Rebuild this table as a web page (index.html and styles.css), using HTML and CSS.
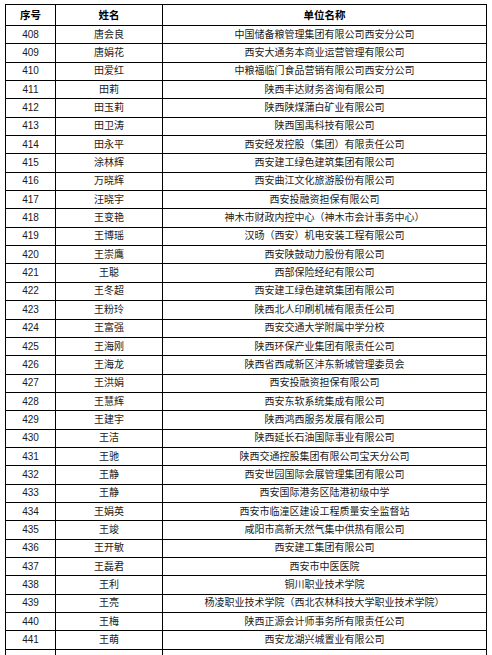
FILE: index.html
```html
<!DOCTYPE html>
<html lang="zh-CN">
<head>
<meta charset="utf-8">
<title>名单</title>
<link rel="stylesheet" href="styles.css">
</head>
<body>
<table class="list">
  <colgroup>
    <col class="c-no">
    <col class="c-name">
    <col class="c-org">
  </colgroup>
  <thead>
    <tr class="head"><th>序号</th><th>姓名</th><th>单位名称</th></tr>
  </thead>
  <tbody>
    <tr><td>408</td><td>唐会良</td><td>中国储备粮管理集团有限公司西安分公司</td></tr>
    <tr><td>409</td><td>唐娟花</td><td>西安大通务本商业运营管理有限公司</td></tr>
    <tr><td>410</td><td>田爱红</td><td>中粮福临门食品营销有限公司西安分公司</td></tr>
    <tr><td>411</td><td>田莉</td><td>陕西丰达财务咨询有限公司</td></tr>
    <tr><td>412</td><td>田玉莉</td><td>陕西陕煤蒲白矿业有限公司</td></tr>
    <tr><td>413</td><td>田卫涛</td><td>陕西国禹科技有限公司</td></tr>
    <tr><td>414</td><td>田永平</td><td>西安经发控股（集团）有限责任公司</td></tr>
    <tr><td>415</td><td>涂林辉</td><td>西安建工绿色建筑集团有限公司</td></tr>
    <tr><td>416</td><td>万晓辉</td><td>西安曲江文化旅游股份有限公司</td></tr>
    <tr><td>417</td><td>汪晓宇</td><td>西安投融资担保有限公司</td></tr>
    <tr><td>418</td><td>王变艳</td><td>神木市财政内控中心（神木市会计事务中心）</td></tr>
    <tr><td>419</td><td>王博瑶</td><td>汉旸（西安）机电安装工程有限公司</td></tr>
    <tr><td>420</td><td>王崇鹰</td><td>西安陕鼓动力股份有限公司</td></tr>
    <tr><td>421</td><td>王聪</td><td>西部保险经纪有限公司</td></tr>
    <tr><td>422</td><td>王冬超</td><td>西安建工绿色建筑集团有限公司</td></tr>
    <tr><td>423</td><td>王粉玲</td><td>陕西北人印刷机械有限责任公司</td></tr>
    <tr><td>424</td><td>王富强</td><td>西安交通大学附属中学分校</td></tr>
    <tr><td>425</td><td>王海刚</td><td>陕西环保产业集团有限责任公司</td></tr>
    <tr><td>426</td><td>王海龙</td><td>陕西省西咸新区沣东新城管理委员会</td></tr>
    <tr><td>427</td><td>王洪娟</td><td>西安投融资担保有限公司</td></tr>
    <tr><td>428</td><td>王慧辉</td><td>西安东软系统集成有限公司</td></tr>
    <tr><td>429</td><td>王建宇</td><td>陕西鸿西服务发展有限公司</td></tr>
    <tr><td>430</td><td>王洁</td><td>陕西延长石油国际事业有限公司</td></tr>
    <tr><td>431</td><td>王驰</td><td>陕西交通控股集团有限公司宝天分公司</td></tr>
    <tr><td>432</td><td>王静</td><td>西安世园国际会展管理集团有限公司</td></tr>
    <tr><td>433</td><td>王静</td><td>西安国际港务区陆港初级中学</td></tr>
    <tr><td>434</td><td>王娟英</td><td>西安市临潼区建设工程质量安全监督站</td></tr>
    <tr><td>435</td><td>王竣</td><td>咸阳市高新天然气集中供热有限公司</td></tr>
    <tr><td>436</td><td>王开敏</td><td>西安建工集团有限公司</td></tr>
    <tr><td>437</td><td>王磊君</td><td>西安市中医医院</td></tr>
    <tr><td>438</td><td>王利</td><td>铜川职业技术学院</td></tr>
    <tr><td>439</td><td>王亮</td><td>杨凌职业技术学院（西北农林科技大学职业技术学院）</td></tr>
    <tr><td>440</td><td>王梅</td><td>陕西正源会计师事务所有限责任公司</td></tr>
    <tr><td>441</td><td>王萌</td><td>西安龙湖兴城置业有限公司</td></tr>
    <tr class="cut"><td></td><td></td><td></td></tr>
  </tbody>
</table>
</body>
</html>
```
FILE: styles.css
```css
html, body {
  margin: 0;
  padding: 0;
  background: #fff;
  overflow: hidden;
}

body {
  padding: 4px 0 0 5px;
  font-family: "Liberation Sans", "Noto Sans CJK SC", sans-serif;
  font-size: 10px;
  color: #1a1a1a;
}

.list {
  border-collapse: collapse;
  table-layout: fixed;
  width: 481px;
}

.c-no { width: 50px; }
.c-name { width: 107px; }
.c-org { width: 324px; }

.list th,
.list td {
  border: 1px solid #000;
  padding: 0;
  text-align: center;
  vertical-align: middle;
  line-height: 12px;
  white-space: nowrap;
  overflow: hidden;
}

.head th {
  height: 20px;
  font-weight: bold;
  font-size: 10.5px;
  color: #000;
}

.list tbody tr {
  height: 18.35px;
}

.list tbody td {
  height: 17px;
}
```
